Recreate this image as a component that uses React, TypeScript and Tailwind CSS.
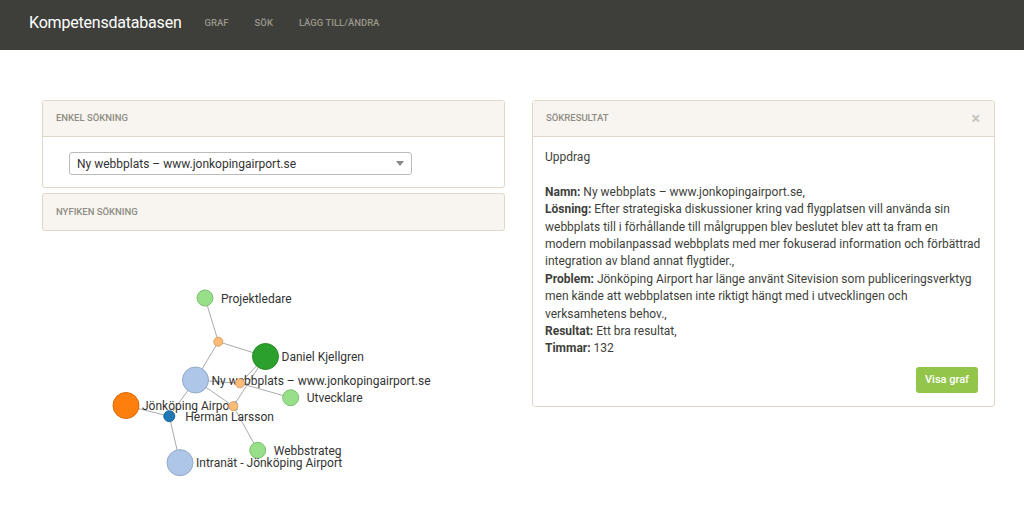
import React from "react";

type Node = { id: string; x: number; y: number; r: number; fill: string; stroke: string; label?: string };

const nodes: Record<string, Node> = {
  P: { id: "P", x: 205, y: 297, r: 8, fill: "#98df8a", stroke: "#7fbf72", label: "Projektledare" },
  D: { id: "D", x: 265.5, y: 355.5, r: 13, fill: "#2ca02c", stroke: "#258a25", label: "Daniel Kjellgren" },
  N: { id: "N", x: 195.5, y: 379, r: 13, fill: "#aec7e8", stroke: "#92a9c8", label: "Ny webbplats – www.jonkopingairport.se" },
  U: { id: "U", x: 290.7, y: 396.7, r: 8, fill: "#98df8a", stroke: "#7fbf72", label: "Utvecklare" },
  J: { id: "J", x: 126, y: 404.5, r: 13, fill: "#ff7f0e", stroke: "#d96b0b", label: "Jönköping Airport" },
  H: { id: "H", x: 169.3, y: 415.2, r: 5.5, fill: "#1f77b4", stroke: "#1a6599", label: "Herman Larsson" },
  W: { id: "W", x: 257.7, y: 449.3, r: 8, fill: "#98df8a", stroke: "#7fbf72", label: "Webbstrateg" },
  I: { id: "I", x: 180, y: 461.7, r: 13, fill: "#aec7e8", stroke: "#92a9c8", label: "Intranät - Jönköping Airport" },
  o1: { id: "o1", x: 218.3, y: 340.7, r: 4.5, fill: "#ffbb78", stroke: "#dda066" },
  o2: { id: "o2", x: 240, y: 382.3, r: 4.5, fill: "#ffbb78", stroke: "#dda066" },
  o3: { id: "o3", x: 233.3, y: 405.2, r: 4.5, fill: "#ffbb78", stroke: "#dda066" },
};

const links: [string, string][] = [
  ["P", "o1"], ["o1", "D"], ["o1", "N"], ["N", "o2"], ["o2", "U"], ["o2", "D"],
  ["N", "o3"], ["o3", "D"], ["o3", "W"], ["J", "H"], ["N", "H"], ["H", "I"],
];

const order = ["P", "D", "N", "U", "J", "H", "W", "I", "o1", "o2", "o3"];

function Graph() {
  return (
    <svg width={463} height={277} viewBox="42 230 463 277" className="block">
      {links.map(([a, b], i) => (
        <line key={i} x1={nodes[a].x} y1={nodes[a].y} x2={nodes[b].x} y2={nodes[b].y} stroke="#aaa" strokeWidth={1} />
      ))}
      {order.map((k) => {
        const n = nodes[k];
        return (
          <g key={k}>
            <circle cx={n.x} cy={n.y} r={n.r} fill={n.fill} stroke={n.stroke} strokeWidth={1} />
            {n.label && (
              <text x={n.x + 16} y={n.y + 4.5} fontSize={12} fill="#333" style={{ fontFamily: "Roboto, sans-serif" }}>
                {n.label}
              </text>
            )}
          </g>
        );
      })}
    </svg>
  );
}

export default function App() {
  return (
    <div className="min-h-[507px] bg-white text-[#3e3f3a] font-['Roboto',sans-serif]">
      <nav className="h-[50px] bg-[#3e3f3a] flex items-center pl-[29px] pb-[4px]">
        <span className="text-white text-[16px] tracking-[-0.2px]">Kompetensdatabasen</span>
        <div className="flex items-center ml-[23px] gap-[26px] text-[9.5px] font-medium text-[#98978b] uppercase">
          <span>Graf</span>
          <span>Sök</span>
          <span>Lägg till/Ändra</span>
        </div>
      </nav>

      <div className="flex gap-[27px] pl-[42px] pt-[50px]">
        <div className="w-[463px] flex flex-col">
          <div className="border border-[#dfd7ca] rounded-[3px]">
            <div className="h-[36px] bg-[#f8f5f0] border-b border-[#dfd7ca] flex items-center pl-[13px] text-[9.5px] font-medium text-[#8e8c84] uppercase">
              Enkel sökning
            </div>
            <div className="h-[50px] pl-[26px] pt-[15px]">
              <div className="w-[343px] h-[23px] border border-[#bbb] rounded-[3px] flex items-center pl-[7px] pr-[7px] text-[12px] text-[#333]">
                <span className="flex-1">Ny webbplats – www.jonkopingairport.se</span>
                <svg width="8" height="5" viewBox="0 0 8 5"><path d="M0 0h8L4 5z" fill="#888" /></svg>
              </div>
            </div>
          </div>
          <div className="mt-[5px] h-[38px] border border-[#dfd7ca] rounded-[3px] bg-[#f8f5f0] flex items-center pl-[13px] text-[9.5px] font-medium text-[#8e8c84] uppercase">
            Nyfiken sökning
          </div>
          <Graph />
        </div>

        <div className="w-[463px] self-start border border-[#dfd7ca] rounded-[3px]">
          <div className="h-[36px] bg-[#f8f5f0] border-b border-[#dfd7ca] flex items-center pl-[13px] pr-[14px] text-[9.5px] font-medium text-[#8e8c84] uppercase">
            <span className="flex-1">Sökresultat</span>
            <span className="text-[16px] font-bold text-[#c8c5bf] leading-none">×</span>
          </div>
          <div className="px-[12px] pt-[12px] pb-[13px] text-[12px] leading-[17.4px] whitespace-nowrap">
            <p>Uppdrag</p>
            <p className="mt-[17.4px]">
              <b>Namn:</b> Ny webbplats – www.jonkopingairport.se,
              <br />
              <b>Lösning:</b> Efter strategiska diskussioner kring vad flygplatsen vill använda sin
              <br />
              webbplats till i förhållande till målgruppen blev beslutet blev att ta fram en
              <br />
              modern mobilanpassad webbplats med mer fokuserad information och förbättrad
              <br />
              integration av bland annat flygtider.,
              <br />
              <b>Problem:</b> Jönköping Airport har länge använt Sitevision som publiceringsverktyg
              <br />
              men kände att webbplatsen inte riktigt hängt med i utvecklingen och
              <br />
              verksamhetens behov.,
              <br />
              <b>Resultat:</b> Ett bra resultat,
              <br />
              <b>Timmar:</b> 132
            </p>
            <div className="flex justify-end mt-[9px] pr-[4px]">
              <button className="h-[26px] w-[62px] bg-[#93c54b] rounded-[3px] text-white text-[11px] font-medium">Visa graf</button>
            </div>
          </div>
        </div>
      </div>
    </div>
  );
}
